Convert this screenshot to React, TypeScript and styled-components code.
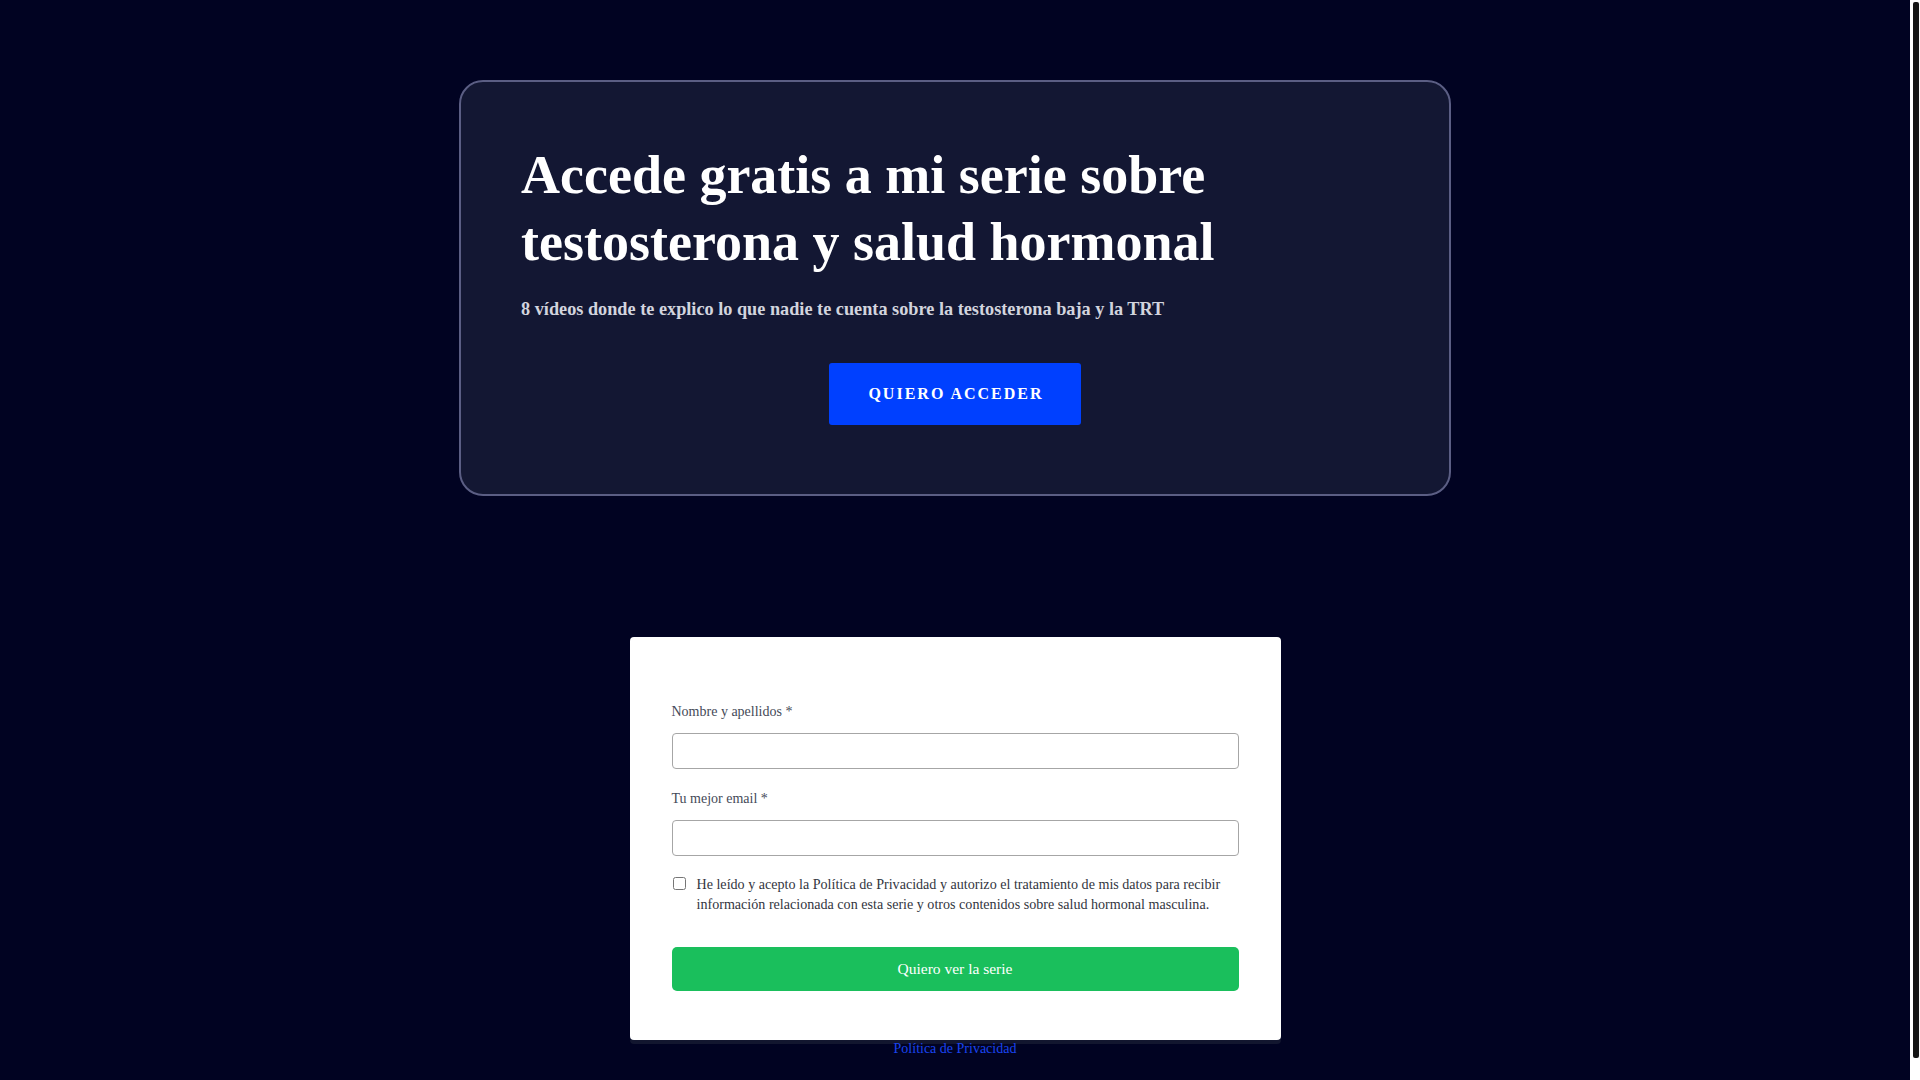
import React from 'react'
import styled, { createGlobalStyle } from 'styled-components'

const GlobalStyle = createGlobalStyle`
  html {
    background: #010322;
  }
  body {
    margin: 0;
    background: #010322;
    font-family: 'Liberation Serif', 'Times New Roman', serif;
  }
  * {
    box-sizing: border-box;
  }
`

const Page = styled.main`
  display: flex;
  flex-direction: column;
  align-items: center;
  padding: 80px 10px 48px 0;
  min-height: 1104px;
`

// the page scrolls a little: the reference shows a thin light scrollbar on the right
const ScrollTrack = styled.div`
  position: fixed;
  top: 0;
  right: 0;
  width: 10px;
  height: 100vh;
  background: #ffffff;
  padding: 2px 1px 22px 3px;
`

const ScrollThumb = styled.div`
  width: 100%;
  height: 100%;
  background: #151515;
  border-radius: 2px;
`

const Hero = styled.section`
  width: 992px;
  padding: 60px 60px 69px;
  background: #131733;
  border: 2px solid #5b5e84;
  border-radius: 24px;
  display: flex;
  flex-direction: column;
`

const Title = styled.h1`
  margin: 0;
  font-size: 54px;
  line-height: 67px;
  font-weight: 700;
  color: #ffffff;
`

const Subtitle = styled.p`
  margin: 20px 0 0;
  font-size: 18.25px;
  line-height: 27px;
  font-weight: 700;
  color: #d2d4de;
`

const CtaButton = styled.button`
  align-self: center;
  margin-top: 40px;
  width: 252px;
  height: 62px;
  border: none;
  border-radius: 3px;
  background: #0040ff;
  color: #ffffff;
  font-family: inherit;
  font-size: 16px;
  font-weight: 700;
  letter-spacing: 2px;
  text-indent: 2px;
  cursor: pointer;
`

const FormCard = styled.form`
  margin-top: 141px;
  width: 651px;
  padding: 65px 42px 49px;
  background: #ffffff;
  border-radius: 4px;
  box-shadow: 0 4px 0 #12162f;
  display: flex;
  flex-direction: column;
`

const Field = styled.div`
  display: flex;
  flex-direction: column;
  gap: 11px;
  margin-bottom: 20px;

  &:last-of-type {
    margin-bottom: 18px;
  }
`

const Label = styled.label`
  font-size: 14px;
  line-height: 20px;
  color: #454a58;
`

const Input = styled.input`
  height: 36px;
  width: 100%;
  padding: 0 10px;
  border: 1px solid #a6a6a6;
  border-radius: 4px;
  background: #ffffff;
  font-family: inherit;
  font-size: 14px;
  outline: none;
`

const ConsentRow = styled.label`
  display: flex;
  align-items: flex-start;
  gap: 11px;
  font-size: 14.1px;
  line-height: 20px;
  color: #333641;
`

const Check = styled.input`
  flex: none;
  width: 13px;
  height: 13px;
  margin: 3px 0 0 1px;
`

const SubmitButton = styled.button`
  margin-top: 33px;
  height: 44px;
  width: 100%;
  border: none;
  border-radius: 5px;
  background: #1abf5c;
  color: #ffffff;
  font-family: inherit;
  font-size: 15.5px;
  cursor: pointer;
`

const PrivacyLink = styled.a`
  margin-top: 1px;
  font-size: 14px;
  color: #1a44f0;
  text-decoration: none;
`

export default function App() {
  return (
    <>
      <GlobalStyle />
      <Page>
        <Hero>
          <Title>Accede gratis a mi serie sobre testosterona y salud hormonal</Title>
          <Subtitle>
            8 vídeos donde te explico lo que nadie te cuenta sobre la testosterona baja y la TRT
          </Subtitle>
          <CtaButton type="button">QUIERO ACCEDER</CtaButton>
        </Hero>

        <FormCard onSubmit={(e) => e.preventDefault()}>
          <Field>
            <Label htmlFor="nombre">Nombre y apellidos *</Label>
            <Input id="nombre" type="text" />
          </Field>
          <Field>
            <Label htmlFor="email">Tu mejor email *</Label>
            <Input id="email" type="email" />
          </Field>
          <ConsentRow>
            <Check type="checkbox" />
            <span>
              He leído y acepto la Política de Privacidad y autorizo el tratamiento de mis datos para
              recibir información relacionada con esta serie y otros contenidos sobre salud hormonal
              masculina.
            </span>
          </ConsentRow>
          <SubmitButton type="submit">Quiero ver la serie</SubmitButton>
        </FormCard>

        <PrivacyLink href="#">Política de Privacidad</PrivacyLink>
      </Page>
      <ScrollTrack>
        <ScrollThumb />
      </ScrollTrack>
    </>
  )
}
